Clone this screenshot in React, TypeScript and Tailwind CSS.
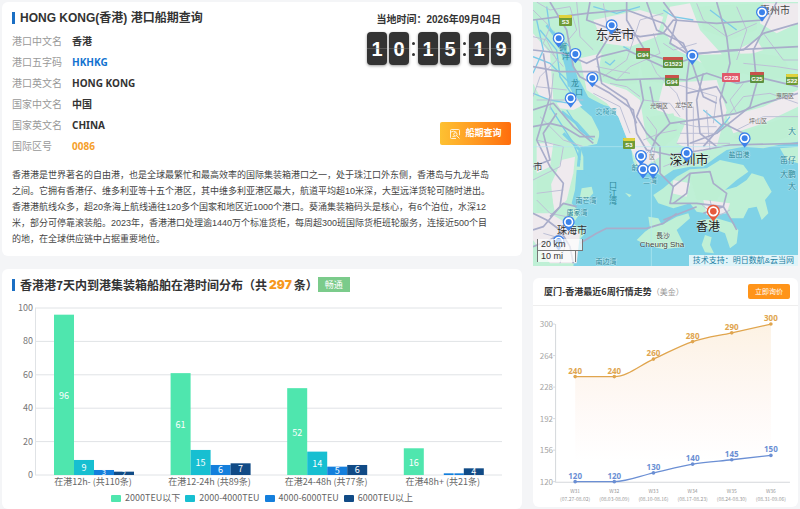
import type { ReactNode } from 'react';

const portInfo = [
  { label: '港口中文名', value: '香港', color: 'text-[#333]' },
  { label: '港口五字码', value: 'HKHKG', color: 'text-[#1272d0]' },
  { label: '港口英文名', value: 'HONG KONG', color: 'text-[#333]' },
  { label: '国家中文名', value: '中国', color: 'text-[#333]' },
  { label: '国家英文名', value: 'CHINA', color: 'text-[#333]' },
  { label: '国际区号', value: '0086', color: 'text-[#f5a02c]' },
];

const series = [
  { name: '2000TEU以下', color: '#4fe6ae' },
  { name: '2000-4000TEU', color: '#17bfd1' },
  { name: '4000-6000TEU', color: '#147fdc' },
  { name: '6000TEU以上', color: '#114b86' },
];

const groups = [
  { name: '在港12h- (共110条)', values: [96, 9, 3, 2] },
  { name: '在港12-24h (共89条)', values: [61, 15, 6, 7] },
  { name: '在港24-48h (共77条)', values: [52, 14, 5, 6] },
  { name: '在港48h+ (共21条)', values: [16, 0, 1, 4] },
];

const weeks = [
  { week: 'W31', range: '(07.27-08.02)', high: 240, low: 120 },
  { week: 'W32', range: '(08.03-08.09)', high: 240, low: 120 },
  { week: 'W33', range: '(08.10-08.16)', high: 260, low: 130 },
  { week: 'W34', range: '(08.17-08.23)', high: 280, low: 140 },
  { week: 'W35', range: '(08.24-08.30)', high: 290, low: 145 },
  { week: 'W36', range: '(08.31-09.06)', high: 300, low: 150 },
];

const Card = ({ className = '', children }: { className?: string; children: ReactNode }) => (
  <section className={`rounded-md bg-white ${className}`}>{children}</section>
);

const Digit = ({ value }: { value: string }) => (
  <span className="relative flex h-[33px] w-5 items-center justify-center rounded-sm bg-[#333] text-xl font-bold text-white shadow-[0_1px_3px_rgba(0,0,0,0.4)]">
    {value}
    <span className="absolute inset-x-0 top-4 h-px bg-[#777]/50" />
  </span>
);

const Colon = () => (
  <span className="flex w-[5px] flex-col items-center gap-2">
    <i className="size-[3px] rounded-full bg-[#333]" />
    <i className="size-[3px] rounded-full bg-[#333]" />
  </span>
);

const PortCard = () => (
  <Card className="flex flex-col gap-[10px] pt-[9px] pr-[11px] pb-[9px] pl-[10px]">
    <div className="flex justify-between">
      <div>
        <h1 className="flex h-[14px] items-center gap-[5px] text-xs font-bold whitespace-nowrap text-[#333]">
          <span className="h-3 w-[3px] bg-[#1b6fc4]" />
          HONG KONG(香港) 港口船期查询
        </h1>
        <dl className="mt-[6px] text-[10px] leading-[21px]">
          {portInfo.map(row => (
            <div key={row.label} className="flex">
              <dt className="w-[60px] text-[#999]">{row.label}</dt>
              <dd className={`font-['Noto_Sans','Noto_Sans_CJK_SC',sans-serif] font-bold ${row.color}`}>{row.value}</dd>
            </div>
          ))}
        </dl>
      </div>
      <div className="flex flex-col items-end">
        <p className="mr-[10px] text-[10px] leading-[18px] font-bold text-[#333]">当地时间：2026年09月04日</p>
        <div className="mt-[3px] flex items-center gap-[2px]">
          <Digit value="1" />
          <Digit value="0" />
          <Colon />
          <Digit value="1" />
          <Digit value="5" />
          <Colon />
          <Digit value="1" />
          <Digit value="9" />
        </div>
        <button className="mt-[57px] flex h-[23px] w-[71px] items-center justify-center gap-1 rounded-xs bg-linear-to-r from-[#fdc132] to-[#ff6d0c] text-[9px] font-bold text-white">
          <svg viewBox="0 0 12 12" className="size-3" fill="none" stroke="#fff" strokeWidth="0.8" aria-hidden="true">
            <path d="M2.5 1.5h7a1 1 0 0 1 1 1v4.8M7 10.5H2.5a1 1 0 0 1-1-1v-7a1 1 0 0 1 1-1M1.5 4.2l3-1 3 1M3.5 8.6h2.2" />
            <circle cx="6.4" cy="6.4" r="1.7" />
            <path d="M7.7 7.7l2.8 2.8" />
          </svg>
          船期查询
        </button>
      </div>
    </div>
    <p className="max-w-[482px] text-[9px] leading-4 text-[#444]">
      香港港是世界著名的自由港，也是全球最繁忙和最高效率的国际集装箱港口之一，处于珠江口外东侧，香港岛与九龙半岛之间。它拥有香港仔、维多利亚等十五个港区，其中维多利亚港区最大，航道平均超10米深，大型远洋货轮可随时进出。香港港航线众多，超20条海上航线通往120多个国家和地区近1000个港口。葵涌集装箱码头是核心，有6个泊位，水深12米，部分可停靠滚装船。2023年，香港港口处理逾1440万个标准货柜，每周超300班国际货柜班轮服务，连接近500个目的地，在全球供应链中占据重要地位。
    </p>
  </Card>
);

const BarChart = () => {
  const base = 176;
  const y = (v: number) => base - v * 1.67;
  return (
    <svg viewBox="0 0 520 190" className="block w-full font-['Noto_Sans_CJK_SC',sans-serif]" fontSize="9">
      {[0, 20, 40, 60, 80, 100].map(t => (
        <g key={t}>
          <line x1="33" x2="500" y1={y(t)} y2={y(t)} stroke="#e0e3e6" />
          <text x="31" y={y(t) + 3} textAnchor="end" fill="#777">{t}</text>
        </g>
      ))}
      <line x1="33.5" x2="33.5" y1={y(100)} y2={base} stroke="#e0e3e6" />
      {groups.map((g, i) => {
        const left = 52 + i * 116.6;
        return (
          <g key={g.name}>
            {g.values.map((v, j) => (
              <rect key={j} x={left + j * 20} y={y(v)} width="20" height={v * 1.67} fill={series[j].color} />
            ))}
            {g.values.map((v, j) => v > 0 && (
              <text key={j} x={left + j * 20 + 10} y={y(v / 2) + (v > 8 ? 4 : 3)} textAnchor="middle" fill="#fff" fontSize={v > 3 ? 9 : 7}>{v}</text>
            ))}
            <text x={left + 39} y={base + 10} textAnchor="middle" fill="#666">{g.name}</text>
          </g>
        );
      })}
    </svg>
  );
};

const StayCard = () => (
  <Card className="grow pt-2">
    <h2 className="flex h-[15px] items-center px-[10px] font-['Noto_Sans_CJK_SC',sans-serif] text-xs font-bold whitespace-nowrap text-[#333]">
      <span className="mr-[5px] h-3 w-[3px] bg-[#1b6fc4]" />
      香港港7天内到港集装箱船舶在港时间分布（共
      <em className="mx-[2px] font-['Inter',sans-serif] text-xs font-black text-[#f7981d] not-italic">297</em>
      条）
      <span className="flex h-[15px] w-8 items-center justify-center bg-[#7bcb8b] text-[9px] font-normal text-white">畅通</span>
    </h2>
    <div className="pt-[7px]">
      <BarChart />
    </div>
    <ul className="mt-[2px] flex justify-center gap-[5px] font-['Noto_Sans_CJK_SC',sans-serif] text-[9px] leading-[14px] text-[#666]">
      {series.map(s => (
        <li key={s.name} className="flex items-center gap-1">
          <span className="h-[7px] w-[10px] rounded-[1px]" style={{ background: s.color }} />
          {s.name}
        </li>
      ))}
    </ul>
  </Card>
);

// map shapes are drawn on a 795x792 sheet, three units to a pixel
const urban = [
  'M150 175L215 160L200 240L290 270L330 300L350 420L390 470L330 510L300 440L265 350L230 310L170 270Z',
  'M190 60L330 30L400 50L380 110L300 140L220 130Z',
  'M420 20L480 10L510 90L600 190L560 215L500 180L440 150L400 90Z',
  'M700 10L804 10L804 70L740 100L690 70Z',
  'M400 250L560 240L590 330L560 440L500 460L440 430L470 360L380 330Z',
  'M590 350L700 320L804 270L804 320L700 370L610 400Z',
  'M9 640L60 640L110 670L150 700L140 790L60 790L9 720Z',
  'M95 480L135 470L130 520L110 600L75 640L60 560Z',
  'M9 100L60 160L70 300L30 290L9 250Z',
  'M430 540L480 550L470 590L425 580Z',
  'M520 600L600 610L590 640L530 645Z',
  'M620 150L680 120L700 150L640 170Z',
  'M80 310L140 290L160 315L130 330L90 325Z',
  'M20 430L70 430L60 500L20 520Z',
];

const forests = [
  'M215 180L250 160L330 190L320 250L260 260L215 230Z',
  'M500 165L680 160L760 170L790 230L700 240L640 220L540 230Z',
  'M330 190L400 170L440 220L400 250L340 240Z',
  'M610 410L700 375L804 340L804 400L720 430L640 435Z',
  'M500 20L690 10L680 90L600 120L520 90Z',
  'M360 350L430 340L450 400L400 440L360 400Z',
  'M20 540L60 520L70 620L20 640Z',
  'M480 530L530 520L580 570L560 600L500 600Z',
];

const roads = [
  'M9 200L90 215L200 215L260 240L400 235L470 240L530 220L620 250L700 235L804 260',
  'M60 6L110 90L130 200L150 230L240 280L310 330L320 400L350 450L420 465L520 450L600 435L804 430',
  'M180 6L170 60L250 90L200 170L215 250L290 300L320 370',
  'M9 60L90 50L170 40L290 30L400 70L480 165L600 150L804 140',
  'M290 6L290 60L350 160L440 190L500 170',
  'M350 6L380 90L460 130L490 200L520 290L560 310',
  'M400 6L440 60L420 130L480 165L470 240L470 350L475 460',
  'M560 6L590 110L600 190L570 300L580 370L520 440',
  'M740 6L700 90L670 150L680 250L660 320L560 400L480 430',
  'M804 70L700 100L640 150L500 160',
  'M804 280L700 310L620 340L560 350L420 370L380 410L360 460',
  'M9 380L60 370L100 380L150 410L195 410',
  'M40 160L60 290L20 420L60 500L100 550L90 620L40 680L9 690',
  'M9 330L70 310L130 380L190 430',
  'M9 150L100 160L170 190L210 170L290 150L400 200',
  'M9 500L60 480L40 400L80 340',
  'M330 240L340 300L320 350L350 400L390 440L390 520L430 560L480 520L540 515L550 550L590 580L580 620L520 640',
  'M430 560L420 610L500 610L580 620L610 670L620 690',
  'M480 520L470 580L430 610M400 660L500 620',
  'M150 730L200 700L230 685L350 685L400 670L440 640',
  'M9 640L50 660L90 690L120 740L130 790',
  'M60 650L100 610L140 620M9 740L60 720L110 690',
  'M580 370L640 400L650 440M420 370L400 330L370 310L360 260',
  'M520 220L500 300L510 400L560 440M470 280L560 260L590 310',
  'M250 90L330 110L400 100L430 60L560 70L700 60',
];

const lanes = [
  'M9 30L60 80L40 130L100 200M9 110L50 120L80 180L30 230L9 290M20 6L60 30L120 20L140 90L90 150',
  'M140 6L150 110L190 150M220 10L230 70L310 120L330 60L400 40M310 120L290 180L220 230',
  'M260 240L300 200L390 160L370 100M350 160L380 220L440 280L460 330M430 250L560 290L550 370',
  'M450 370L500 380L560 380M450 400L550 400M440 430L600 430M490 320L490 460M530 330L540 450',
  'M340 300L420 310L450 350M340 420L390 400L440 390M330 480L360 450L380 500M350 350L380 390L370 480',
  'M500 10L520 60L590 110L680 70M620 20L650 90L620 180M640 190L740 200L804 210M700 100L760 180L804 180',
  'M600 340L640 290L720 280L804 310M620 390L700 350L804 350M640 250L600 300L620 340',
  'M20 420L100 440L90 500L9 540M20 580L100 570M20 600L60 640L110 650M40 700L110 720L90 790',
  'M20 300L110 300L160 300M20 260L110 270M30 350L100 420L160 440M70 220L60 330',
  'M510 610L560 650L600 630M540 600L550 640M430 500L500 490L540 470M400 500L450 480',
  'M190 280L270 320L300 400M240 250L290 260L330 290M200 200L300 220M400 130L430 150L500 130',
];

const streams = [
  'M50 20L60 90L120 140L125 200M9 170L60 190L120 250M30 90L80 150L90 230L130 290M9 280L60 300L120 310',
  'M190 20L260 40L330 20M400 30L430 50L490 60M540 30L620 90M520 330L580 380M560 400L600 350',
  'M20 60L40 150L9 220M110 330L150 390L190 420M60 320L130 430L150 480M225 185L240 195L255 180M280 140L300 150',
];

const pins = [
  [245, 76], [86, 115], [136, 162], [187, 234], [122, 295], [696, 37], [487, 167],
  [644, 415], [470, 459], [333, 468], [339, 508], [369, 508], [116, 666], [86, 724],
];

const Pin = ({ x, y, color, size = 1 }: { x: number; y: number; color: string; size?: number }) => (
  <g transform={`translate(${x} ${y}) scale(${size})`}>
    <path d="M0 28L-11 14A18 18 0 1 1 11 14Z" fill={color} />
    <circle r="14" fill="#fff" />
    <circle r="9" fill={color} />
  </g>
);

const shields = [
  { x: 22, y: 12, w: 13, text: 'S3', top: '#e0d23c', bg: '#6f9b37' },
  { x: 99, y: 45, w: 14, text: 'G94', top: '#c9524b', bg: '#5d9140' },
  { x: 126, y: 54, w: 20, text: 'G1523', top: '#c9524b', bg: '#5d9140' },
  { x: 128, y: 72, w: 14, text: 'G94', top: '#c9524b', bg: '#5d9140' },
  { x: 185, y: 70, w: 18, text: 'G228', top: '#e0596a', bg: '#e0596a' },
  { x: 213, y: 69, w: 14, text: 'G25', top: '#c9524b', bg: '#5d9140' },
  { x: 249, y: 71, w: 12, text: 'S22', top: '#e0d23c', bg: '#6f9b37' },
  { x: 86, y: 135, w: 12, text: 'S3', top: '#e0d23c', bg: '#6f9b37' },
];

// x is the middle of the name
const places = [
  { x: 82, y: 37, text: '东莞市', size: 13, color: '#333' },
  { x: 242, y: 12, text: '惠州市', size: 10, color: '#444' },
  { x: 156, y: 162, text: '深圳市', size: 13, color: '#222' },
  { x: 175, y: 229, text: '香港', size: 12, color: '#222' },
  { x: 39, y: 232, text: '珠海市', size: 10, color: '#333' },
  { x: 5, y: 168, text: '市', size: 9, color: '#444' },
  { x: 126, y: 106, text: '光明区', size: 6, color: '#666' },
  { x: 151, y: 105, text: '龙华区', size: 6, color: '#666' },
  { x: 252, y: 96, text: '惠阳区', size: 6, color: '#666' },
  { x: 225, y: 121, text: '坪山区', size: 6, color: '#666' },
  { x: 119, y: 157, text: '区', size: 6, color: '#888' },
  { x: 73, y: 112, text: '交椅湾', size: 7, color: '#3c9db0' },
  { x: 53, y: 201, text: '南芒湾', size: 7, color: '#2b8798' },
  { x: 44, y: 213, text: '唐家湾', size: 7, color: '#2b8798' },
  { x: 102, y: 168, text: '前', size: 7, color: '#2b8798' },
  { x: 117, y: 181, text: '二湾', size: 7, color: '#2b8798' },
  { x: 206, y: 155, text: '盐田港', size: 7, color: '#2b8798' },
  { x: 73, y: 262, text: '南边湾', size: 7, color: '#2b8798' },
  { x: 259, y: 132, text: '大', size: 8, color: '#2b8798' },
  { x: 255, y: 161, text: '笛仔', size: 8, color: '#2b8798' },
  { x: 255, y: 175, text: '大鹏', size: 8, color: '#2b8798' },
  { x: 259, y: 187, text: '大', size: 8, color: '#2b8798' },
  { x: 130, y: 236, text: '長沙', size: 7, color: '#444' },
  { x: 129, y: 245, text: 'Cheung Sha', size: 8, color: '#444' },
];

const PortMap = () => (
  <div className="relative overflow-hidden bg-[#7fd2e6]">
    <svg viewBox="0 0 265 264" className="block w-full font-['Liberation_Sans','Noto_Sans_CJK_SC',sans-serif]" role="img" aria-label="香港港口地图">
      <g transform="scale(0.33333) translate(-9 -6)">
        <g fill="#bff0d6">
          <path d="M9 6H804V425L745 435L700 445L640 440L590 450L560 470L520 500L480 500L430 510L400 530L380 520L330 520L310 490L303 440L285 400L265 350L240 320L200 310L165 285L145 240L130 190L100 130L70 90L95 150L115 210L118 260L150 320L185 350L210 400L200 435L150 440L160 470L160 510L140 510L135 570L125 610L150 640L130 670L165 700L140 730L130 800H9Z" />
          <path d="M370 585L400 565L440 530L480 508L530 505L570 480L640 495L655 515L620 540L585 570L620 560L650 540L665 520L700 530L725 575L705 600L715 640L695 660L680 620L655 625L640 655L600 655L590 630L560 645L500 635L480 610L430 625L385 610Z" />
          <path d="M320 720L345 695L360 685L355 650L385 655L395 675L440 650L475 640L480 655L440 690L465 740L400 748L350 735Z" />
          <path d="M510 660L560 655L605 668L625 690L620 730L600 745L585 700L560 690L520 685Z" />
          <path d="M525 705L545 712L540 735L552 760L525 757L515 735Z" />
          <path d="M155 565L185 560L190 580L170 600L150 590ZM285 578L305 585L298 592ZM750 445L804 440V490L770 480Z" />
        </g>
        <g fill="#efeaee">
          {urban.map(d => <path key={d} d={d} />)}
        </g>
        <g fill="#bdefd3">
          {forests.map(d => <path key={d} d={d} />)}
        </g>
        <path d="M148 240L175 292L220 315L262 350L285 420L303 470L330 525L230 560L165 520L162 440L210 430L205 370L170 330L150 310L128 270Z" fill="#7fd2e6" />
        <path d="M50 75L85 120L120 180L140 260M88 130L110 200L118 260M95 335L140 370L180 415M100 400L150 450L145 500" fill="none" stroke="#7fd2e6" strokeWidth="9" />
        <g fill="none" stroke="#7ccbe8" strokeWidth="4">
          {streams.map(d => <path key={d} d={d} />)}
        </g>
        <g fill="none" stroke="#bdc0d6" strokeWidth="3">
          {lanes.map(d => <path key={d} d={d} />)}
        </g>
        <g fill="none" stroke="#a9adca" strokeWidth="5" strokeLinejoin="round">
          {roads.map(d => <path key={d} d={d} />)}
        </g>
        <path d="M9 440H804M364 450V798" stroke="#b5e8f0" strokeWidth="2" />
      </g>
      {shields.map(s => (
        <g key={`${s.x}-${s.y}`}>
          <rect x={s.x + 4} y={s.y + 1} width={s.w} height={s.text === 'G228' ? 9 : 11} rx="1" fill={s.bg} />
          <rect x={s.x + 4} y={s.y + 1} width={s.w} height="3" rx="1" fill={s.top} />
          <text x={s.x + 4 + s.w / 2} y={s.y + (s.text === 'G228' ? 8 : 10)} textAnchor="middle" fontSize="6" fontWeight="bold" fill="#fff">{s.text}</text>
        </g>
      ))}
      <g textAnchor="middle" stroke="#fff" strokeWidth="1" strokeOpacity="0.4" paintOrder="stroke">
        {places.map(p => (
          <text key={`${p.text}-${p.y}`} x={p.x} y={p.y} fontSize={p.size} fill={p.color}>{p.text}</text>
        ))}
      </g>
      <g fontSize="8" fill="#2b8798" textAnchor="middle">
        <text x="30" y="48">狮</text>
        <text x="33" y="57">洋</text>
        <text x="42" y="84">龙</text>
        <text x="46" y="93">口</text>
        <text x="80" y="186">口</text>
        <text x="80" y="194">江</text>
        <text x="80" y="202">湾</text>
      </g>
      <g transform="scale(0.33333) translate(-9 -6)">
        {pins.map(([x, y]) => <Pin key={`${x}-${y}`} x={x} y={y} color="#3c82ea" />)}
        <Pin x={550} y={634} color="#e65a3c" size={1.1} />
      </g>
    </svg>
    <div className="absolute bottom-1 left-1 font-['Liberation_Sans',sans-serif] text-[9px] leading-[11px] text-[#333]">
      <div className="w-[46px] border-x border-b border-[#777] bg-white/70 pl-[3px]">20 km</div>
      <div className="w-[39px] border-x border-[#777] bg-white/70 pl-[3px]">10 mi</div>
    </div>
    <a href="#support" className="absolute right-0 bottom-0 bg-white/75 px-1 text-[8px] leading-[11px] text-[#1b7da3]">
      技术支持：明日数航&云当网
    </a>
  </div>
);

const xAt = (i: number) => 42 + i * 39;
const yAt = (v: number) => 175 - ((v - 120) * 157) / 180;

// flat segments stay flat, the rest eases through the mean slope
const curve = (vals: number[]) => {
  const slopes = vals.slice(1).map((v, i) => yAt(v) - yAt(vals[i]));
  const tangent = (i: number) => {
    const a = slopes[Math.max(i - 1, 0)];
    const b = slopes[Math.min(i, slopes.length - 1)];
    return a === 0 || b === 0 ? 0 : (a + b) / 2;
  };
  return vals.slice(1).reduce(
    (d, v, i) =>
      `${d}C${xAt(i) + 13} ${yAt(vals[i]) + tangent(i) / 3} ${xAt(i + 1) - 13} ${yAt(v) - tangent(i + 1) / 3} ${xAt(i + 1)} ${yAt(v)}`,
    `M${xAt(0)} ${yAt(vals[0])}`,
  );
};

const LineChart = () => {
  const lines = [
    { color: '#e0a54e', values: weeks.map(w => w.high) },
    { color: '#6b8fd4', values: weeks.map(w => w.low) },
  ];
  return (
    <svg viewBox="0 0 264 200" className="block w-full font-['Noto_Sans_CJK_SC',sans-serif]">
      <defs>
        <linearGradient id="fade" x1="0" y1="0" x2="0" y2="1">
          <stop offset="0" stopColor="#f0b45c" stopOpacity="0.17" />
          <stop offset="1" stopColor="#f7a08c" stopOpacity="0" />
        </linearGradient>
      </defs>
      <path d={`${curve(lines[0].values)}V155H${xAt(0)}Z`} fill="url(#fade)" />
      <path d="M22.5 18V175.5H256" fill="none" stroke="#d5d8dc" />
      {[120, 156, 192, 228, 264, 300].map(t => (
        <g key={t}>
          <text x="20" y={yAt(t) + 3} textAnchor="end" fontSize="8" fill="#a5a5a5">{t}</text>
          <line x1="20" x2="22" y1={yAt(t)} y2={yAt(t)} stroke="#d5d8dc" />
        </g>
      ))}
      {lines.map(l => (
        <g key={l.color} fill={l.color}>
          <path d={curve(l.values)} fill="none" stroke={l.color} strokeWidth="1.3" />
          {l.values.map((v, i) => (
            <g key={i}>
              <circle cx={xAt(i)} cy={yAt(v)} r="1.8" />
              <text x={xAt(i)} y={yAt(v) - 3} textAnchor="middle" fontSize="8" fontWeight="bold" className="font-['Noto_Sans',sans-serif]">{v}</text>
            </g>
          ))}
        </g>
      ))}
      <g fontSize="5" fill="#999" textAnchor="middle">
        {weeks.map((w, i) => (
          <g key={w.week}>
            <text x={xAt(i)} y="186">{w.week}</text>
            <text x={xAt(i)} y="194">{w.range}</text>
          </g>
        ))}
      </g>
    </svg>
  );
};

const TrendCard = () => (
  <Card>
    <div className="flex h-7 items-center border-b border-[#eee] pr-2 pl-[11px]">
      <h2 className="font-['Noto_Sans_CJK_SC',sans-serif] text-[9px] font-bold text-[#333]">
        厦门-香港最近6周行情走势
        <span className="text-[8px] font-normal text-[#999]">（美金）</span>
      </h2>
      <button className="ml-auto h-[15px] w-[42px] rounded-xs bg-[#ff9419] text-[7px] leading-[15px] text-white">立即询价</button>
    </div>
    <LineChart />
  </Card>
);

const App = () => (
  <main className="grid min-h-screen grid-cols-[520fr_265fr] gap-[11px] bg-[#f4f5f7] px-[2px] pt-[2px] font-['Liberation_Sans','Noto_Sans_CJK_SC',sans-serif]">
    <div className="flex min-w-0 flex-col gap-[13px]">
      <PortCard />
      <StayCard />
    </div>
    <div className="flex min-w-0 flex-col gap-3">
      <PortMap />
      <TrendCard />
    </div>
  </main>
);

export default App;
